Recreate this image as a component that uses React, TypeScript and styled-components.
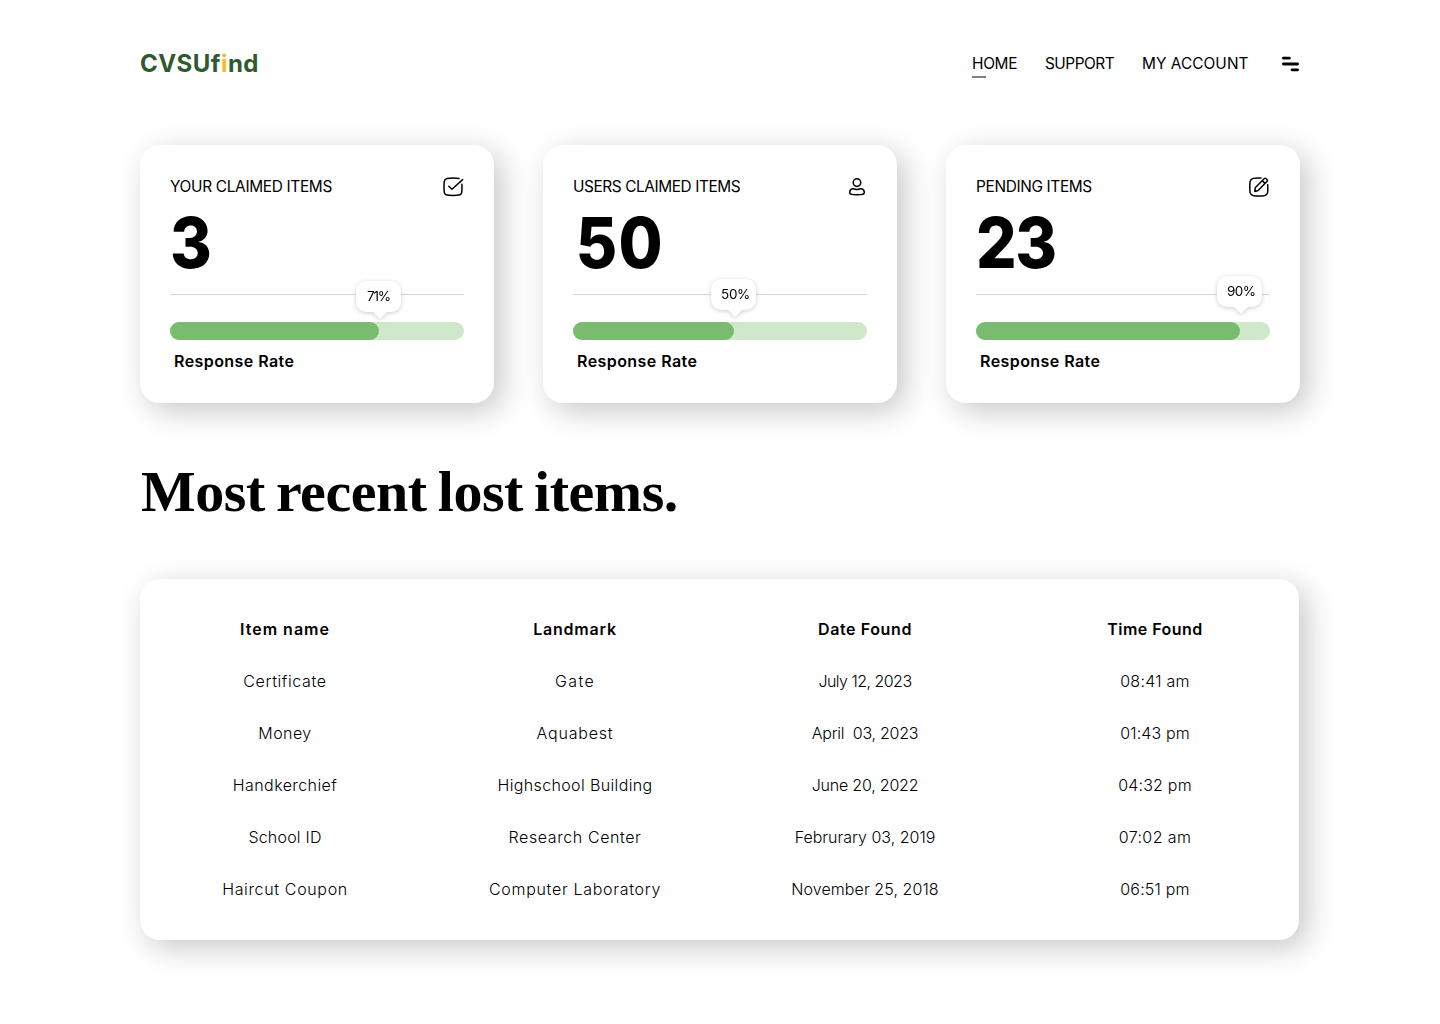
import React from "react";
import styled, { createGlobalStyle } from "styled-components";

const GlobalStyle = createGlobalStyle`
  * { box-sizing: border-box; }
  body {
    margin: 0;
    background: #fff;
    color: #000;
    font-family: Inter, "Open Sans", sans-serif;
  }
`;

const Page = styled.div`
  width: 1160px;
  min-height: 1024px;
  margin: 0 auto;
`;

const Header = styled.header`
  display: flex;
  align-items: center;
  justify-content: space-between;
  height: 145px;
  padding-bottom: 17px;
`;

const Logo = styled.div`
  font-size: 24px;
  line-height: 32px;
  font-weight: 700;
  letter-spacing: 0.45px;
  color: #2f5a2f;
`;

const LogoAccent = styled.span`
  color: #fdb827;
`;

const Nav = styled.nav`
  display: flex;
  align-items: center;
`;

const NavLink = styled.a<{ $width: number; $spacing: number; $active?: boolean }>`
  position: relative;
  width: ${(p) => p.$width}px;
  font-size: 15.4px;
  line-height: 24px;
  white-space: nowrap;
  letter-spacing: ${(p) => p.$spacing}px;

  &::after {
    content: "";
    display: ${(p) => (p.$active ? "block" : "none")};
    position: absolute;
    left: 0;
    bottom: -2px;
    width: 14px;
    height: 2px;
    background: #808080;
  }
`;

const Cards = styled.section`
  display: grid;
  grid-template-columns: repeat(3, 354px);
  justify-content: space-between;
`;

const Panel = styled.div`
  background: #fff;
  border-radius: 20px;
  box-shadow: 8px 8px 30px rgba(0, 0, 0, 0.22);
`;

const Card = styled(Panel)`
  height: 258px;
  padding: 29px 30px 0;
`;

const CardTop = styled.div`
  display: flex;
  align-items: center;
  justify-content: space-between;
  height: 25px;
`;

const CardTitle = styled.h2<{ $spacing: number }>`
  margin: 0;
  font-size: 15.4px;
  line-height: 24px;
  font-weight: 400;
  letter-spacing: ${(p) => p.$spacing}px;
`;

const Count = styled.div<{ $spacing: number; $indent: number }>`
  height: 95px;
  padding-left: ${(p) => p.$indent}px;
  font-size: 70px;
  line-height: 88px;
  font-weight: 800;
  letter-spacing: ${(p) => p.$spacing}px;
  transform: scaleX(0.91);
  transform-origin: left;
`;

const Divider = styled.hr`
  height: 1px;
  margin: 0 0 27px;
  border: 0;
  background: #c6e4c1;
`;

const Track = styled.div`
  position: relative;
  height: 18px;
  border-radius: 9px;
  background: #cee8c9;
`;

const Fill = styled.div`
  height: 18px;
  border-radius: 9px;
  background: #79bc70;
`;

const Bubble = styled.div<{ $lift: number; $spacing: number; $inset: number }>`
  position: absolute;
  bottom: ${(p) => 18 + p.$lift}px;
  width: 45px;
  height: 31px;
  margin-left: -23px;
  padding-left: ${(p) => p.$inset}px;
  border-radius: 10px;
  background: #fff;
  filter: drop-shadow(0 1px 2px rgba(0, 0, 0, 0.2));
  font-size: 13.5px;
  line-height: 31px;
  letter-spacing: ${(p) => p.$spacing}px;

  &::after {
    content: "";
    position: absolute;
    left: 16px;
    top: 30px;
    border: 8px solid transparent;
    border-top-color: #fff;
    border-bottom: 0;
  }
`;

const RateLabel = styled.div`
  padding: 9px 0 0 4px;
  font-size: 16px;
  line-height: 24px;
  font-weight: 600;
  letter-spacing: 0.43px;
`;

const Heading = styled.h1`
  height: 176px;
  margin: 0;
  padding: 56px 0 0 1px;
  font-family: "Liberation Serif", serif;
  font-size: 58px;
  line-height: 66px;
  font-weight: 700;
  letter-spacing: -0.45px;
  word-spacing: -3px;
  white-space: nowrap;
`;

const TablePanel = styled(Panel)`
  width: 1159px;
  height: 361px;
  padding-top: 24px;
`;

const Row = styled.div`
  display: grid;
  grid-template-columns: repeat(4, 290px);
  height: 52px;
  align-items: center;
`;

const Cell = styled.div<{ $spacing: number; $head?: boolean }>`
  font-size: 16px;
  line-height: 24px;
  font-weight: ${(p) => (p.$head ? 600 : 300)};
  text-align: center;
  white-space: pre;
  letter-spacing: ${(p) => p.$spacing}px;
`;

const Icon = styled.svg`
  display: block;
  fill: none;
  stroke: #000;
  stroke-width: 1.5;
  stroke-linecap: round;
  stroke-linejoin: round;
`;

const MenuIcon = styled(Icon)`
  stroke-width: 2.8;
`;

const CheckIcon = () => (
  <Icon width="22" height="22" viewBox="0 0 22 22">
    <path d="M17 2.5C15.500 2.200 13.500 2.100 11 2.100c-2.600 0-4.500.1-6 .4C3.200 2.900 2.600 3.700 2.300 5.300 2.100 6.600 2 8.500 2 10.800s.1 4.200.3 5.500c.3 1.600.9 2.400 2.700 2.800 1.500.3 3.400.4 6 .4s4.500-.1 6-.4c1.800-.4 2.400-1.200 2.700-2.800.2-1.300.3-3.200.3-5.500 0-1 0-1.800-.1-2.500" />
    <path d="M6.800 10.200 10 13.300 20.600 3.600" />
  </Icon>
);

const UserIcon = () => (
  <Icon width="20" height="20" viewBox="0 0 20 20">
    <circle cx="10" cy="5.600" r="3.800" />
    <path d="M5.500 11.700C3.700 12 2.700 13.600 2.700 15.500c0 1.900 1.500 2.300 7.300 2.300s7.300-.4 7.300-2.300c0-1.900-1-3.500-2.800-3.800-1.500-.3-2.300.8-4.500.8s-3-1.100-4.500-.8Z" />
  </Icon>
);

const EditIcon = () => (
  <Icon width="22" height="22" viewBox="0 0 22 22">
    <path d="M13 1.900H11c-2.600 0-4.500.1-6 .5-1.800.4-2.500 1.300-2.900 3C1.900 6.700 1.800 8.700 1.800 11s.1 4.300.3 5.600c.4 1.700 1.100 2.600 2.900 3 1.500.4 3.300.5 5.900.5s4.400-.1 5.900-.5c1.800-.4 2.500-1.300 2.800-3 .2-1.300.2-3.300.2-5.600 0-.9 0-1.600-.1-2.300" />
    <path d="m6.800 15.400.4-3.100c0-.4.2-.7.500-1l8.700-8.800c.5-.5 1-.5 1.500 0l1.200 1.200c.5.5.5 1 0 1.500l-8.700 9c-.3.300-.6.500-1 .6l-2.600.6ZM14.300 4.700l2.700 2.700" />
  </Icon>
);

type Stat = {
  title: string;
  titleSpacing: number;
  count: string;
  countSpacing: number;
  countIndent: number;
  percent: string;
  percentSpacing: number;
  inset: number;
  fill: number;
  lift: number;
  icon: React.ReactNode;
};

const stats: Stat[] = [
  { title: "YOUR CLAIMED ITEMS", titleSpacing: -0.32, count: "3", countSpacing: 0, countIndent: 0, percent: "71%", percentSpacing: -1.2, inset: 11, fill: 209, lift: 10, icon: <CheckIcon /> },
  { title: "USERS CLAIMED ITEMS", titleSpacing: -0.41, count: "50", countSpacing: 1.5, countIndent: 3, percent: "50%", percentSpacing: -0.3, inset: 10, fill: 161, lift: 12, icon: <UserIcon /> },
  { title: "PENDING ITEMS", titleSpacing: -0.35, count: "23", countSpacing: -1.5, countIndent: 0, percent: "90%", percentSpacing: -0.6, inset: 10, fill: 264, lift: 15, icon: <EditIcon /> },
];

const headers: [string, number][] = [
  ["Item name", 1],
  ["Landmark", 0.8],
  ["Date Found", 0.6],
  ["Time Found", 0.45],
];

const rows: [string, number][][] = [
  [["Certificate", 0.62], ["Gate", 1.4], ["July 12, 2023", -0.53], ["08:41 am", 0.25]],
  [["Money", 0.43], ["Aquabest", 0.8], ["April  03, 2023", -0.25], ["01:43 pm", 0.12]],
  [["Handkerchief", 0.42], ["Highschool Building", 0.36], ["June 20, 2022", -0.21], ["04:32 pm", 0.2]],
  [["School ID", 0.2], ["Research Center", 0.59], ["Februrary 03, 2019", 0], ["07:02 am", 0.4]],
  [["Haircut Coupon", 0.65], ["Computer Laboratory", 0.7], ["November 25, 2018", 0.08], ["06:51 pm", 0.2]],
];

export default function App() {
  return (
    <>
      <GlobalStyle />
      <Page>
        <Header>
          <Logo>
            CVSUf<LogoAccent>i</LogoAccent>nd
          </Logo>
          <Nav>
            <NavLink $width={73} $spacing={-0.3} $active>HOME</NavLink>
            <NavLink $width={97} $spacing={-0.5}>SUPPORT</NavLink>
            <NavLink $width={139} $spacing={0.05}>MY ACCOUNT</NavLink>
            <MenuIcon width="19" height="18" viewBox="0 0 19 18">
              <path d="M2.4 3.2h6M2.4 9h14.2M11 14.8h5.6" />
            </MenuIcon>
          </Nav>
        </Header>

        <Cards>
          {stats.map((s) => (
            <Card key={s.title}>
              <CardTop>
                <CardTitle $spacing={s.titleSpacing}>{s.title}</CardTitle>
                {s.icon}
              </CardTop>
              <Count $spacing={s.countSpacing} $indent={s.countIndent}>{s.count}</Count>
              <Divider />
              <Track>
                <Fill style={{ width: s.fill }} />
                <Bubble $lift={s.lift} $spacing={s.percentSpacing} $inset={s.inset} style={{ left: s.fill }}>
                  {s.percent}
                </Bubble>
              </Track>
              <RateLabel>Response Rate</RateLabel>
            </Card>
          ))}
        </Cards>

        <Heading>Most recent lost items.</Heading>

        <TablePanel>
          <Row>
            {headers.map(([text, spacing]) => (
              <Cell key={text} $spacing={spacing} $head>{text}</Cell>
            ))}
          </Row>
          {rows.map((row) => (
            <Row key={row[0][0]}>
              {row.map(([text, spacing]) => (
                <Cell key={text} $spacing={spacing}>{text}</Cell>
              ))}
            </Row>
          ))}
        </TablePanel>
      </Page>
    </>
  );
}
